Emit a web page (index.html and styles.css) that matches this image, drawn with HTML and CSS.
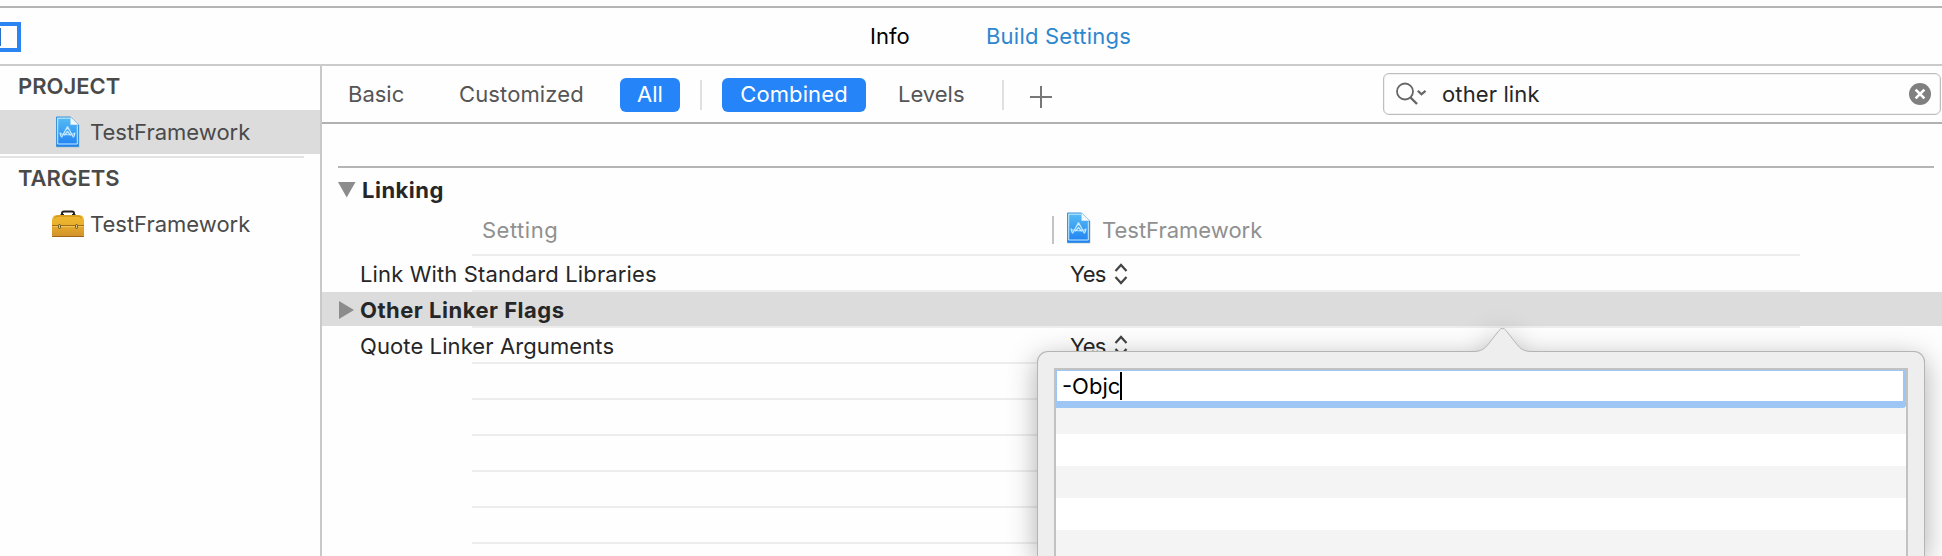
FILE: index.html
```html
<!DOCTYPE html>
<html lang="en">
<head>
<meta charset="utf-8">
<title>TestFramework</title>
<link rel="stylesheet" href="styles.css">
</head>
<body>
<svg class="defs" width="0" height="0">
  <defs>
    <linearGradient id="sky" x1="0" y1="0" x2="0" y2="1"><stop offset="0" stop-color="#57bdf3"/><stop offset="1" stop-color="#1f80f4"/></linearGradient>
    <linearGradient id="gold" x1="0" y1="0" x2="0" y2="1"><stop offset="0" stop-color="#f0b92c"/><stop offset=".4" stop-color="#e9b02f"/><stop offset="1" stop-color="#d0902a"/></linearGradient>
    <symbol id="doc" viewBox="0 0 26 33">
      <path d="M1.500 1.500H16L24.500 9.500V31.500H1.500z" fill="#8fa9bd" opacity=".5"/>
      <path d="M1.500 1H15.500L23.500 9V30.500H1.500z" fill="url(#sky)" stroke="#3d93d8" stroke-width="1"/>
      <path d="M2.700 2.200H15.200M2.700 2V28H22.300V9.500" fill="none" stroke="#c9ecfb" stroke-width="1"/>
      <path d="M15.500 1V8.800H23.500z" fill="#f2f8fb"/>
      <path d="M12.500 10.500L6.500 21.500M12.500 10.500L18.500 21.500M10 14.500L12.500 12L15 14.500M4.800 17.500Q12.500 20 20 17.500M5 16.500L6 20.500M20 16.500L19 20.500M9 19.500L12.500 15.500L16 19.500" fill="none" stroke="#c5ebff" stroke-width="1.200"/>
    </symbol>
  </defs>
</svg>

<header class="tabs">
  <svg class="panel-toggle" width="21" height="30" viewBox="0 0 21 30"><path d="M0 2H19V28H0" fill="none" stroke="#2a85f2" stroke-width="4"/><path d="M.5 6V24" stroke="#2a70c8" stroke-width="1"/></svg>
  <span class="tab tab-info">Info</span>
  <span class="tab tab-active">Build Settings</span>
</header>

<div class="workspace">
  <aside class="sidebar">
    <h2 class="group">PROJECT</h2>
    <div class="item item-selected"><svg class="doc" width="26" height="33"><use href="#doc"/></svg><span>TestFramework</span></div>
    <div class="divider"></div>
    <h2 class="group">TARGETS</h2>
    <div class="item">
      <svg class="toolbox" width="32" height="28" viewBox="0 0 32 28">
        <path d="M10 5V3.500Q10 1.500 12 1.500H20Q22 1.500 22 3.500V5" fill="none" stroke="#26231c" stroke-width="2"/>
        <path d="M8.500 5H12M20 5H23.500" stroke="#26231c" stroke-width="2"/>
        <path d="M0 11Q0 5 5 5H27Q32 5 32 11V25Q32 27 30 27H2Q0 27 0 25z" fill="url(#gold)"/>
        <path d="M2.500 8Q4 6 6 6H26Q28 6 29.500 8" fill="none" stroke="#c08a1c"/>
        <path d="M0 15.500H32" stroke="#a56c12"/><path d="M1 16.500H31" stroke="#f2c558"/>
        <path d="M0 26.500H32" stroke="#a0661c"/>
        <rect x="6.500" y="14.500" width="2" height="4" rx="1" fill="#d8c890" stroke="#675529"/>
        <rect x="23.500" y="14.500" width="2" height="4" rx="1" fill="#d8c890" stroke="#675529"/>
      </svg>
      <span>TestFramework</span>
    </div>
  </aside>

  <main class="editor">
    <div class="filters">
      <span class="filter filter-basic">Basic</span>
      <span class="filter filter-custom">Customized</span>
      <span class="pill pill-all">All</span>
      <i class="sep"></i>
      <span class="pill pill-combined">Combined</span>
      <span class="filter filter-levels">Levels</span>
      <i class="sep"></i>
      <svg class="plus" width="22" height="22" viewBox="0 0 22 22"><path d="M0 11H22M11 0V22" stroke="#777" stroke-width="2"/></svg>
      <div class="search">
        <svg width="32" height="24" viewBox="0 0 32 24"><circle cx="9" cy="9.500" r="8" fill="none" stroke="#666" stroke-width="1.800"/><path d="M14.500 15.500L21 22" stroke="#666" stroke-width="2.400"/><path d="M21.800 8.800L25.500 12.300L29.500 8.800" fill="none" stroke="#666" stroke-width="2.200"/></svg>
        <span class="query">other link</span>
        <svg width="22" height="22" viewBox="0 0 22 22"><circle cx="11" cy="11" r="11" fill="#808080"/><path d="M6.600 6.600L15.400 15.400M15.400 6.600L6.600 15.400" stroke="#fff" stroke-width="2.600"/></svg>
      </div>
    </div>

    <section class="settings">
      <div class="section-title"><svg width="18" height="16" viewBox="0 0 18 16"><path d="M0 0H17.500L8.700 15.500z" fill="#8c8c8c"/></svg><span>Linking</span></div>
      <div class="columns">
        <span class="col-setting">Setting</span>
        <i class="col-sep"></i>
        <svg class="doc" width="26" height="33"><use href="#doc"/></svg>
        <span class="col-target">TestFramework</span>
      </div>
      <div class="row">
        <span class="name name-libs">Link With Standard Libraries</span><span class="value">Yes</span>
        <svg class="stepper" width="14" height="22" viewBox="0 0 14 22"><path d="M1.500 8L7 2L12.500 8M1.500 14L7 20L12.500 14" fill="none" stroke="#444" stroke-width="2.200"/></svg>
      </div>
      <div class="row row-selected">
        <svg class="arrow" width="15" height="18" viewBox="0 0 15 18"><path d="M0 0V18L15 9z" fill="#8c8c8c"/></svg>
        <span class="name name-flags">Other Linker Flags</span>
      </div>
      <div class="row">
        <span class="name name-quote">Quote Linker Arguments</span><span class="value">Yes</span>
        <svg class="stepper" width="14" height="22" viewBox="0 0 14 22"><path d="M1.500 8L7 2L12.500 8M1.500 14L7 20L12.500 14" fill="none" stroke="#444" stroke-width="2.200"/></svg>
      </div>
      <div class="row"></div>
      <div class="row"></div>
      <div class="row"></div>
      <div class="row"></div>
      <div class="row"></div>
    </section>
  </main>
</div>

<div class="popover">
  <svg class="pointer" width="60" height="26" viewBox="0 0 60 26"><path d="M0 24.500C8 24.500 11.500 22 15 17.500L26 3.500Q29.500 -1 33 3.500L44 17.500C47.500 22 51 24.500 59 24.500V26H0z" fill="#eee"/><path d="M0 24.500C8 24.500 11.500 22 15 17.500L26 3.500Q29.500 -1 33 3.500L44 17.500C47.500 22 51 24.500 59 24.500" fill="none" stroke="#b4b4b4"/></svg>
  <div class="list">
    <div class="edit"><span class="edit-text">-Objc</span><i class="caret"></i></div>
    <div class="stripe stripe-first"></div>
    <div class="stripe"></div>
    <div class="stripe"></div>
    <div class="stripe"></div>
    <div class="stripe stripe-last"></div>
  </div>
</div>
</body>
</html>
```
FILE: styles.css
```css
* { box-sizing: border-box; }
body {
  margin: 0;
  width: 1942px;
  height: 556px;
  position: relative;
  overflow: hidden;
  background: #fefefe;
  color: #262626;
  font: 22px/26px Inter, "Open Sans", sans-serif;
  white-space: nowrap;
}
svg { display: block; flex: none; }
.defs { position: absolute; }

.tabs {
  display: flex;
  align-items: center;
  height: 66px;
  padding-top: 6px;
  border-bottom: 2px solid #cbcbcb;
  background: linear-gradient(#b4b4b4, #b4b4b4) 0 6px / 100% 2px no-repeat;
}
.panel-toggle { margin-top: 4px; }
.tab { padding-top: 2px; }
.tab-info { margin-left: 849px; width: 116px; color: #000; }
.tab-active { color: #2e86cf; letter-spacing: .22px; }

.workspace { display: flex; height: 490px; overflow: hidden; }

.sidebar {
  width: 322px;
  flex: none;
  border-right: 2px solid #c9c9c9;
  color: #4a4a4a;
}
.group {
  margin: 0 0 4px;
  padding-left: 18px;
  font-size: 22px;
  font-weight: 600;
  line-height: 40px;
}
.item {
  display: flex;
  align-items: center;
  height: 44px;
  padding-left: 55px;
}
.item .doc { margin-right: 9px; }
.item-selected { background: #dcdcdc; }
.toolbox { margin: 0 6px 0 -3px; }
.divider {
  width: 304px;
  height: 4px;
  border-bottom: 2px solid #e3e3e3;
}

.editor { flex: 1; min-width: 0; }

.filters {
  display: flex;
  align-items: center;
  height: 58px;
  padding-left: 26px;
  border-bottom: 2px solid #b1b1b1;
  color: #555;
}
.filter-basic { width: 111px; }
.filter-custom { width: 161px; letter-spacing: .12px; }
.filter-levels { width: 104px; }
.pill {
  height: 34px;
  margin-top: 2px;
  border-radius: 6px;
  background: #2584f8;
  color: #fff;
  line-height: 32px;
  text-align: center;
}
.pill-all { width: 60px; margin-right: 20px; }
.pill-combined { width: 144px; margin-left: 20px; margin-right: 32px; letter-spacing: .1px; }
.sep { width: 2px; height: 30px; margin-top: 2px; background: #e0e0e0; }
.plus { margin: 6px 0 0 26px; }
.search {
  display: flex;
  align-items: center;
  width: 558px;
  height: 42px;
  margin-left: 331px;
  padding: 0 9px 0 12px;
  border: 1px solid #bdbdbd;
  border-radius: 6px;
  box-shadow: inset 0 0 0 1px #f0f0f0;
}
.query { flex: 1; padding-left: 14px; color: #262626; letter-spacing: .12px; }

.settings {
  margin: 42px 8px 0 16px;
  border-top: 2px solid #b5b5b5;
}
.section-title {
  display: flex;
  align-items: center;
  height: 44px;
  gap: 6px;
  font-weight: 700;
  letter-spacing: .5px;
}
.columns {
  display: flex;
  align-items: center;
  height: 44px;
  padding: 0 0 8px 144px;
  color: #909090;
  background: linear-gradient(#ededed, #ededed) 134px 42px / 1328px 2px no-repeat;
}
.col-setting { width: 570px; letter-spacing: .5px; }
.col-sep { width: 2px; height: 28px; background: #c4c4c4; }
.columns .doc { margin: -4px 10px 0 12px; }

.row {
  display: flex;
  align-items: center;
  height: 36px;
  margin: 0 -8px 0 -16px;
  padding-left: 38px;
  background: linear-gradient(#ededed, #ededed) 150px 34px / 1328px 2px no-repeat;
}
.name { width: 710px; }
.name-libs { letter-spacing: .14px; }
.name-quote { letter-spacing: .1px; }
.name-flags { font-weight: 700; letter-spacing: .5px; }
.value { width: 44px; letter-spacing: -.6px; }
.row-selected {
  padding-left: 17px;
  background:
    linear-gradient(#ededed, #ededed) 150px 34px / 1328px 2px no-repeat,
    linear-gradient(#dcdcdc, #dcdcdc) 0 0 / 100% 34px no-repeat;
}
.arrow { margin-right: 6px; }

.popover {
  position: absolute;
  left: 1037px;
  top: 351px;
  width: 888px;
  height: 205px;
  padding: 16px 16px 0;
  border: 1px solid #b4b4b4;
  border-bottom: 0;
  border-radius: 11px 11px 0 0;
  background: #eee;
  filter: drop-shadow(0 7px 14px rgba(0, 0, 0, .32));
}
.pointer { position: absolute; left: 435px; top: -25px; }
.list {
  height: 188px;
  border: 2px solid #c2c2c2;
  border-bottom: 0;
  background: #fff;
}
.edit {
  display: flex;
  align-items: center;
  height: 38px;
  padding: 0 0 0 5px;
  border: solid #9dc6f4;
  border-width: 1px 3px 7px 1px;
  border-bottom-right-radius: 3px;
  color: #000;
}
.edit-text { line-height: 30px; }
.caret { width: 2px; height: 28px; background: #000; }
.stripe { height: 32px; }
.stripe:nth-child(even) { background: #f4f4f4; }
.stripe-first { height: 26px; }
.stripe-last { height: 26px; }
```
